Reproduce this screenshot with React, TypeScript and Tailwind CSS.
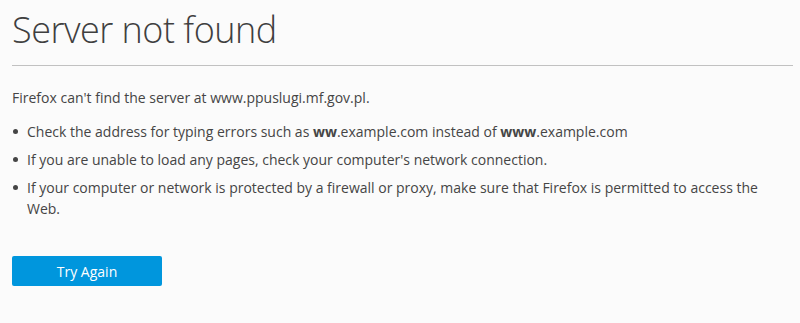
const items: Array<React.ReactNode> = [
  <>
    Check the address for typing errors such as <strong>ww</strong>.example.com instead of{" "}
    <strong>www</strong>.example.com
  </>,
  <>If you are unable to load any pages, check your computer's network connection.</>,
  <>
    If your computer or network is protected by a firewall or proxy, make sure that Firefox is
    permitted to access the Web.
  </>,
];

export default function App() {
  return (
    <div
      className="w-[800px] h-[323px] bg-[#fbfbfb] text-[#454545] pl-[12px] pr-[7px] overflow-hidden"
      style={{ fontFamily: '"Open Sans", "Noto Sans", sans-serif' }}
    >
      <h1 className="pt-[8px] text-[36px] font-light leading-[44px] text-[#3f3f3f] tracking-[-0.5px]">
        Server not found
      </h1>
      <hr className="mt-[13px] border-0 border-t border-[#c1c1c1]" />
      <p className="mt-[21px] text-[14px] leading-[21px]">
        Firefox can't find the server at www.ppuslugi.mf.gov.pl.
      </p>
      <ul className="mt-[13px] flex flex-col gap-[7px] text-[14px] leading-[21px]">
        {items.map((item, i) => (
          <li className="flex" key={i}>
            <span className="w-[15px] shrink-0 flex pt-[8px] pl-[1px]">
              <span className="w-[5px] h-[5px] rounded-full bg-[#454545]" />
            </span>
            <span>{item}</span>
          </li>
        ))}
      </ul>
      <button className="mt-[37px] w-[150px] h-[30px] rounded-[2px] bg-[#0096dd] text-white text-[14px]">
        Try Again
      </button>
    </div>
  );
}
